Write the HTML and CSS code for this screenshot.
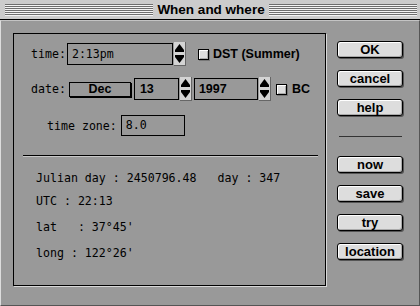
FILE: index.html
```html
<!DOCTYPE html>
<html lang="en">
<head>
    <meta charset="UTF-8">
    <title>When and where</title>
    <link rel="stylesheet" href="styles.css">
</head>
<body>
    <div class="window">
        <div class="titlebar">
            <div class="stripes"></div>
            <div class="title">When and where</div>
            <div class="stripes"></div>
        </div>

        <div class="body">
            <div class="panel">
                <div class="row row-time">
                    <span class="label">time:</span>
                    <div class="field field-time">2:13pm</div>
                    <svg class="spin" width="12" height="24" viewBox="0 0 12 24">
                        <rect x="0" y="0" width="12" height="24" fill="#666"/>
                        <rect x="0" y="0" width="11" height="23" fill="#d4d4d4"/>
                        <path d="M5.5 2 L10 8 L10 10 L1 10 L1 8 Z" fill="#000"/>
                        <path d="M1 13 L10 13 L10 15 L5.5 21 L1 15 Z" fill="#000"/>
                    </svg>
                    <span class="check check-dst"></span>
                    <span class="bold">DST (Summer)</span>
                </div>

                <div class="row row-date">
                    <span class="label">date:</span>
                    <div class="popup">Dec</div>
                    <div class="field bold field-day">13</div>
                    <svg class="spin" width="12" height="24" viewBox="0 0 12 24">
                        <rect x="0" y="0" width="12" height="24" fill="#666"/>
                        <rect x="0" y="0" width="11" height="23" fill="#d4d4d4"/>
                        <path d="M5.5 2 L10 8 L10 10 L1 10 L1 8 Z" fill="#000"/>
                        <path d="M1 13 L10 13 L10 15 L5.5 21 L1 15 Z" fill="#000"/>
                    </svg>
                    <div class="field bold field-year">1997</div>
                    <svg class="spin" width="12" height="24" viewBox="0 0 12 24">
                        <rect x="0" y="0" width="12" height="24" fill="#666"/>
                        <rect x="0" y="0" width="11" height="23" fill="#d4d4d4"/>
                        <path d="M5.5 2 L10 8 L10 10 L1 10 L1 8 Z" fill="#000"/>
                        <path d="M1 13 L10 13 L10 15 L5.5 21 L1 15 Z" fill="#000"/>
                    </svg>
                    <span class="check check-bc"></span>
                    <span class="bold">BC</span>
                </div>

                <div class="row row-zone">
                    <span class="label">time zone:</span>
                    <div class="field field-zone">8.0</div>
                </div>

                <div class="divider"></div>

                <div class="info">
                    <p>Julian day : 2450796.48   day : 347</p>
                    <p>UTC : 22:13</p>
                    <p>lat   : 37°45'</p>
                    <p>long : 122°26'</p>
                </div>
            </div>

            <div class="buttons">
                <div class="btn">OK</div>
                <div class="btn">cancel</div>
                <div class="btn">help</div>
                <div class="separator"></div>
                <div class="btn">now</div>
                <div class="btn">save</div>
                <div class="btn">try</div>
                <div class="btn">location</div>
            </div>
        </div>
    </div>
</body>
</html>
```

FILE: styles.css
```css
body {
    margin: 0;
    background-color: #999;
    font-family: "DejaVu Sans Mono", monospace;
    color: #000;
}

.window {
    width: 420px;
    height: 306px;
    display: flex;
    flex-direction: column;
}

.titlebar {
    height: 19px;
    border-bottom: 1px solid #000;
    background-color: #ccc;
    display: flex;
    align-items: center;
    padding: 0 3px 0 5px;
}

.stripes {
    flex: 1;
    height: 12px;
    margin-top: 1px;
    background: repeating-linear-gradient(#6e6e6e 0 1px, #f4f4f4 1px 2px);
}

.title {
    padding: 0 4px;
    font: bold 13.5px "Liberation Sans", Arial, sans-serif;
    line-height: 19px;
}

.body {
    flex: 1;
    display: flex;
    align-items: flex-start;
    border-top: 1px solid #c4c4c4;
    border-left: 1px solid #ddd;
    border-right: 1px solid #555;
    border-bottom: 1px solid #555;
    padding: 12px 0 0 12px;
}

.panel {
    width: 313px;
    height: 253px;
    box-sizing: border-box;
    border: 1px solid #000;
    box-shadow: 1px 1px 0 #d8d8d8;
    font-size: 11.6px;
}

.row {
    display: flex;
    align-items: center;
    padding-left: 17px;
}

.row-time {
    height: 24px;
    margin-top: 8px;
}

.row-date {
    height: 24px;
    margin-top: 11px;
}

.row-zone {
    height: 21px;
    margin-top: 14px;
    padding-left: 33px;
}

.label {
    white-space: pre;
}

.bold {
    font: bold 12.5px "Liberation Sans", Arial, sans-serif;
}

.field {
    height: 22px;
    box-sizing: border-box;
    border: 1px solid #000;
    padding-left: 4px;
    line-height: 20px;
}

.field-time {
    width: 106px;
    margin-left: 1px;
}

.field-day {
    width: 45px;
    margin-left: 3px;
    padding-left: 5px;
}

.field-year {
    width: 64px;
    margin-left: 2px;
}

.field-zone {
    width: 64px;
    height: 21px;
    line-height: 19px;
    margin-left: 4px;
}

.spin {
    display: block;
    margin-left: 1px;
}

.popup {
    width: 62px;
    height: 15px;
    box-sizing: border-box;
    border: 1px solid #000;
    box-shadow: 1px 1px 0 #000;
    margin-left: 3px;
    text-align: center;
    font: bold 12.5px "Liberation Sans", Arial, sans-serif;
    line-height: 13px;
}

.check {
    width: 11px;
    height: 11px;
    box-sizing: border-box;
    border: 1px solid #000;
    background-color: #ddd;
    box-shadow: inset 1px 1px 0 #fff, inset -1px -1px 0 #aaa, 1px 1px 0 #777;
    margin-right: 4px;
}

.check-dst {
    margin-left: 12px;
}

.check-bc {
    margin-left: 5px;
    margin-right: 5px;
}

.divider {
    height: 1px;
    background-color: #000;
    border-bottom: 1px solid #c8c8c8;
    margin: 19px 7px 0 9px;
}

.info {
    padding-left: 22px;
}

.info p {
    margin: 0;
    line-height: 14px;
    white-space: pre;
}

.info p:first-child {
    margin-top: 14px;
}

.info p + p {
    margin-top: 9px;
}

.info p + p + p {
    margin-top: 12px;
}

.buttons {
    display: flex;
    flex-direction: column;
    gap: 12px;
    width: 67px;
    margin-left: 11px;
    margin-top: 8px;
}

.btn {
    width: 66px;
    height: 17px;
    box-sizing: border-box;
    border: 1px solid #000;
    border-radius: 3px;
    background-color: #ddd;
    box-shadow: 1px 1px 0 #555, inset 1px 1px 0 #fff, inset -1px -1px 0 #aaa;
    text-align: center;
    font: bold 13px "Liberation Sans", Arial, sans-serif;
    line-height: 15px;
}

.separator {
    height: 1px;
    background-color: #333;
    margin: 8px 2px 7px;
}
```
